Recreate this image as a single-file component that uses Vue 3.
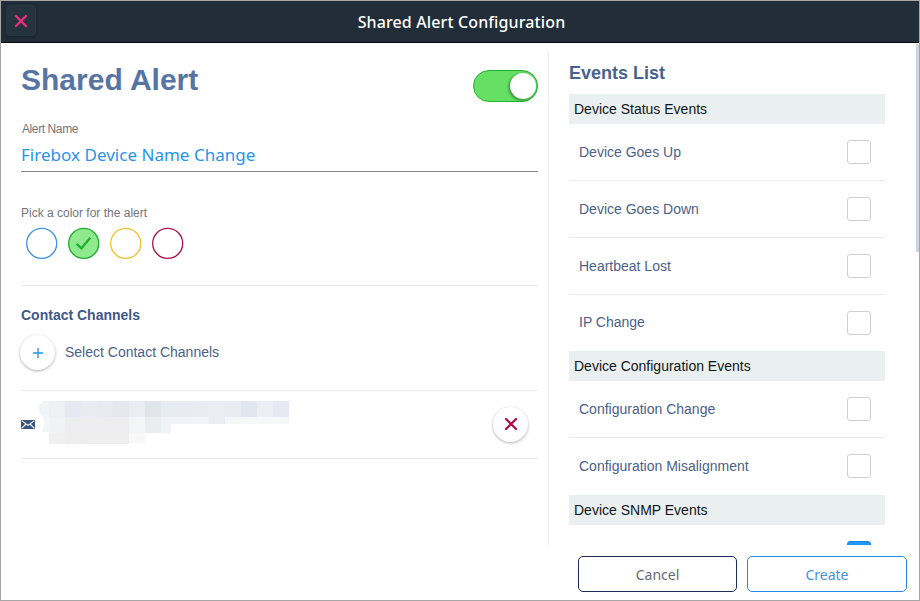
<script setup>
import { ref } from 'vue'

const enabled = ref(true)
const alertName = ref('Firebox Device Name Change')
const selected = ref('green')
const colors = ['blue', 'green', 'yellow', 'red']

const groups = ref([
  {
    title: 'Device Status Events',
    events: [
      { name: 'Device Goes Up', on: false },
      { name: 'Device Goes Down', on: false },
      { name: 'Heartbeat Lost', on: false },
      { name: 'IP Change', on: false },
    ],
  },
  {
    title: 'Device Configuration Events',
    events: [
      { name: 'Configuration Change', on: false },
      { name: 'Configuration Misalignment', on: false },
    ],
  },
  {
    title: 'Device SNMP Events',
    events: [{ name: '', on: true }],
  },
])

// Mosaic blocks hiding the recipient: x, y, width, height, fill
const mosaic = [
  [9, 0, 16, 16, '#eef0f3'], [25, 0, 16, 16, '#e6e9f1'], [41, 0, 16, 16, '#e9ecf2'],
  [57, 0, 16, 16, '#e7eaf0'], [73, 0, 16, 16, '#e4e7ee'], [89, 0, 16, 16, '#ebedf3'],
  [105, 0, 16, 16, '#dfe5eb'], [121, 0, 16, 16, '#e7ebf2'], [137, 0, 16, 16, '#e8ebf2'],
  [153, 0, 16, 16, '#e9ecf2'], [169, 0, 16, 16, '#eaeef3'], [185, 0, 16, 16, '#e9ecf3'],
  [201, 0, 16, 16, '#e2e6ef'], [217, 0, 16, 16, '#eceff4'], [233, 0, 16, 16, '#e6e9f1'],
  [9, 16, 16, 16, '#f1f2f3'], [25, 16, 64, 16, '#ededef'], [89, 16, 16, 16, '#f3f5f7'],
  [105, 16, 16, 16, '#e9edf0'], [121, 16, 10, 16, '#f1f3f6'], [131, 16, 38, 7, '#f1f3f6'],
  [169, 16, 16, 7, '#e9eef4'], [185, 16, 64, 7, '#f5f7f9'],
  [9, 32, 16, 11, '#f0f0f1'], [25, 32, 16, 11, '#ededee'], [41, 32, 48, 11, '#eeeeef'],
  [89, 32, 16, 10, '#f8f8f9'],
]
</script>

<template>
  <div class="dialog">
    <header class="titlebar">
      <button class="close" aria-label="Close">
        <svg width="14" height="14" viewBox="0 0 14 14"><path d="M2 2L12 12M12 2L2 12" /></svg>
      </button>
      <span class="title">Shared Alert Configuration</span>
    </header>

    <main class="content">
      <section class="left">
        <div class="heading">
          <h1>Shared Alert</h1>
          <button class="switch" :class="{ on: enabled }" @click="enabled = !enabled"><i></i></button>
        </div>

        <label class="field">
          <span>Alert Name</span>
          <input v-model="alertName" type="text" spellcheck="false" />
        </label>

        <div class="picker">
          <p>Pick a color for the alert</p>
          <div class="swatches">
            <button v-for="c in colors" :key="c" class="swatch" :class="[c, { picked: c === selected }]" @click="selected = c">
              <svg width="32" height="32" viewBox="0 0 32 32">
                <circle cx="15.7" cy="15.4" r="15" />
                <path v-if="c === selected" d="M8.7 15.9L13.4 20.3L22.3 9.7" />
              </svg>
            </button>
          </div>
        </div>

        <div class="channels">
          <h3>Contact Channels</h3>
          <div class="add">
            <button class="round">
              <svg width="12" height="12" viewBox="0 0 12 12"><path class="plus" d="M6 1V11M1 6H11" /></svg>
            </button>
            <span>Select Contact Channels</span>
          </div>
        </div>

        <div class="recipient">
          <svg class="mail" width="14" height="9" viewBox="0 0 14 9">
            <rect width="14" height="9" fill="#39527f" />
            <path d="M.6 .6L7 5.4L13.4 .6M.6 8.4L5 4M13.4 8.4L9 4" fill="none" stroke="#fff" stroke-width="1.1" />
          </svg>
          <svg class="mosaic" width="254" height="44" viewBox="-2 0 254 44" shape-rendering="crispEdges">
            <path d="M9 0H3L-1 4V11L3 16L5 22L2 31H9Z" fill="#f3f4f5" />
            <rect v-for="(b, i) in mosaic" :key="i" :x="b[0]" :y="b[1]" :width="b[2]" :height="b[3]" :fill="b[4]" />
          </svg>
          <button class="round remove">
            <svg width="14" height="14" viewBox="0 0 14 14"><path class="cross" d="M2 2L12 12M12 2L2 12" /></svg>
          </button>
        </div>
      </section>

      <section class="right">
        <h2>Events List</h2>
        <div v-for="g in groups" :key="g.title" class="group">
          <div class="group-title">{{ g.title }}</div>
          <div v-for="e in g.events" :key="e.name" class="event">
            <span>{{ e.name }}</span>
            <button class="check" :class="{ on: e.on }" @click="e.on = !e.on"></button>
          </div>
        </div>
      </section>
      <div class="scroll"></div>
    </main>

    <footer class="actions">
      <button class="btn cancel">Cancel</button>
      <button class="btn create">Create</button>
    </footer>
  </div>
</template>

<style>
body { margin: 0; overflow: hidden; }
</style>

<style scoped>
* { box-sizing: border-box; }
button { padding: 0; border: 0; background: none; }
h1, h2, h3, p { margin: 0; }
.dialog {
  width: 920px; height: 601px; display: flex; flex-direction: column;
  border: 1px solid #a6a6a6; background: #fff; overflow: hidden;
  font: 14px "Liberation Sans", Arial, sans-serif; color: #4b5f8a;
}
.titlebar {
  height: 42px; flex: none; display: grid; grid-template-columns: 36px 1fr 36px; align-items: center;
  background: #212d39; border-bottom: 1px solid #05080d;
}
.close {
  width: 30px; height: 31px; margin: -3px 0 0 5px; border-radius: 4px; background: #25333f;
  border: 1px solid #2a3946; display: grid; place-items: center; box-shadow: 0 1px 3px #15202a;
}
.close path { stroke: #ee2e7f; stroke-width: 2.3; stroke-linecap: round; }
.title {
  font: 500 16px/42px "Noto Sans", sans-serif; letter-spacing: .12px; color: #fff; text-align: center; padding-left: 3px;
}
.content { height: 502px; flex: none; display: flex; overflow: hidden; }
.left { width: 517px; margin: 0 10px 0 20px; flex: none; }
.heading { display: flex; justify-content: space-between; align-items: flex-start; height: 78px; padding-top: 20px; }
h1 { font-size: 30px; line-height: 34px; color: #5675a3; }
.switch {
  width: 65px; height: 32px; margin: 6.5px 0 0; border-radius: 16px; display: flex; align-items: center;
  background: #ddd; border: 1px solid #bbb;
}
.switch.on { background: #65e065; border-color: #20b52d; justify-content: flex-end; }
.switch i { width: 26px; height: 26px; margin: 0 1px; border-radius: 50%; background: #fff; box-shadow: -1px 1px 3px rgba(0, 70, 0, .65); }
.field { display: block; height: 85px; }
.field span { display: block; font-size: 12px; letter-spacing: -.4px; line-height: 16px; color: #74747c; padding-left: 1px; }
.field input {
  display: block; width: 100%; height: 35px; padding: 1px 0 0; border: 0; border-bottom: 1px solid #85858a; outline: 0;
  font: 17px "Noto Sans", sans-serif; letter-spacing: .02px; color: #2a93ea; background: none;
}
.picker { height: 80px; border-bottom: 1px solid #eaeced; }
.picker p { font-size: 12px; line-height: 14px; color: #74747c; }
.swatches { display: flex; gap: 10.1px; padding: 8px 0 0 5px; }
.swatch { width: 32px; height: 32px; flex: none; }
.swatch svg { display: block; overflow: visible; }
.swatch circle { fill: #fff; stroke-width: 1.3; }
.swatch path { fill: none; stroke: #20ae2c; stroke-width: 2.2; }
.blue circle { stroke: #3f92dc; }
.green circle { stroke: #20ac2b; }
.green.picked circle { fill: #8fe98f; }
.yellow circle { stroke: #f2c230; }
.red circle { stroke: #a9124b; }
.channels { height: 105px; padding-top: 21px; border-bottom: 1px solid #eaeced; }
h3 { font-size: 14px; line-height: 16px; color: #3f5887; }
.add { display: flex; align-items: center; gap: 9px; margin: 12px 0 0 -1px; }
.add span { line-height: 16px; margin-top: -2px; }
.round {
  width: 35px; height: 35px; flex: none; border-radius: 50%; background: #fff; display: grid; place-items: center;
  box-shadow: 0 1px 3px rgba(0, 0, 0, .32);
}
.add .round { margin-right: 1px; }
.plus { stroke: #2196f3; stroke-width: 1.3; }
.cross { stroke: #b3063f; stroke-width: 2.2; stroke-linecap: round; }
.recipient { height: 68px; display: flex; align-items: center; border-bottom: 1px solid #eaeced; }
.mail { flex: none; }
.mosaic { margin: -4px 0 0 3px; flex: none; }
.remove { margin: -1px 10px 0 auto; }
.right { width: 337px; margin-top: 9px; padding: 12px 0 0 20px; border-left: 1px solid #ebedef; height: 493px; overflow: hidden; flex: none; }
h2 { font-size: 18px; line-height: 18px; height: 30px; color: #47628f; }
.group-title { height: 30px; padding-left: 5px; line-height: 30px; background: #eaefef; color: #111519; }
.event { height: 57px; padding: 0 14px 0 10px; display: flex; align-items: center; justify-content: space-between; border-bottom: 1px solid #e9ebed; }
.event:last-child { height: 56.6px; border-bottom-color: transparent; }
/* h2 is the section's first child, so the first group is the second one */
.group:nth-child(2) .event:last-child { height: 56.4px; }
.event span { margin-top: -1px; }
.check { width: 24px; height: 24px; border: 1px solid #d0d0d0; border-radius: 3px; background: #fff; }
.check.on { background: #2196f3; border-color: #1484e8; margin-top: 1px; }
.scroll { width: 3px; height: 208px; margin: 1px 0 0 auto; background: #ccd6e0; }
.actions { flex: 1; display: flex; justify-content: flex-end; gap: 10px; padding: 11px 12px 0 0; }
.btn { width: 160px; height: 36px; border: 1px solid; border-radius: 5px; font: 14px "Noto Sans", sans-serif; }
.cancel { width: 159px; border-color: #1b2c58; color: #64697a; }
.create { border-color: #238be6; color: #4791d6; }
</style>
